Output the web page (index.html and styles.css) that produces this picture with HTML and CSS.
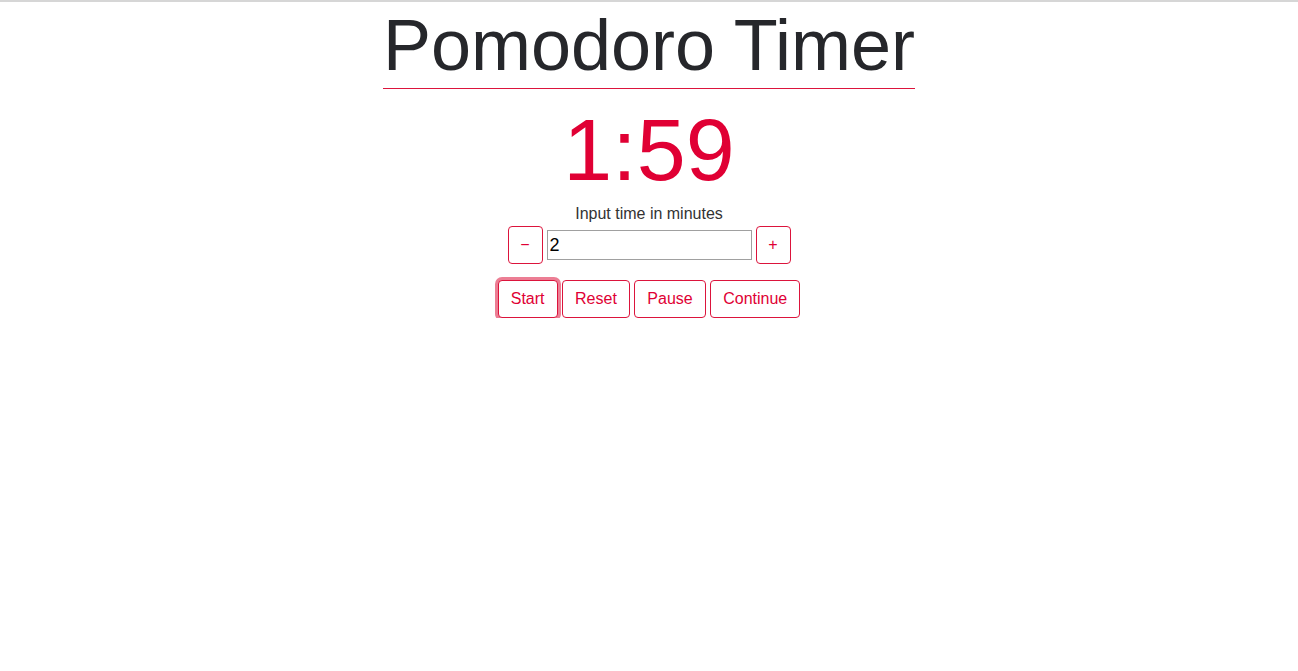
FILE: index.html
```html
<!DOCTYPE html>
<html lang="en">
<head>
<meta charset="utf-8">
<title>Pomodoro Timer</title>
<link rel="stylesheet" href="styles.css">
</head>
<body>
<div class="topline"></div>
<main class="app">
  <h1 class="title">Pomodoro Timer</h1>
  <div class="timer">1:59</div>
  <label class="label" for="minutes">Input time in minutes</label>
  <div class="input-row">
    <button class="btn btn-step">&minus;</button>
    <input id="minutes" class="minutes" type="text" value="2">
    <button class="btn btn-step">+</button>
  </div>
  <div class="controls">
    <button class="btn btn-focus">Start</button>
    <button class="btn">Reset</button>
    <button class="btn">Pause</button>
    <button class="btn">Continue</button>
  </div>
</main>
</body>
</html>
```
FILE: styles.css
```css
html, body {
  margin: 0;
  padding: 0;
  background: #ffffff;
  font-family: "Liberation Sans", Arial, sans-serif;
  color: #212529;
}

.topline {
  height: 2px;
  background: #d6d6d6;
}

.app {
  display: flex;
  flex-direction: column;
  align-items: center;
}

.title {
  margin: 2px 0 0;
  padding-bottom: 2px;
  font-size: 72px;
  font-weight: 400;
  line-height: normal;
  color: #26272b;
  border-bottom: 1px solid #dc143c;
}

.timer {
  margin-top: 10px;
  font-size: 88px;
  line-height: normal;
  color: #e00034;
}

.label {
  margin-top: 4px;
  font-size: 16px;
  line-height: 18px;
  color: #333333;
}

.input-row {
  margin-top: 3px;
  display: flex;
  align-items: center;
  gap: 4px;
}

.minutes {
  box-sizing: border-box;
  width: 205px;
  height: 30px;
  padding: 1px 2px;
  border: 1px solid #a0a0a0;
  font-family: "Liberation Sans", Arial, sans-serif;
  font-size: 18px;
  color: #000;
}

.controls {
  margin-top: 16px;
  display: flex;
  gap: 4.5px;
}

.btn {
  box-sizing: border-box;
  height: 38px;
  padding: 6px 12px;
  border: 1px solid #dc143c;
  border-radius: 4px;
  background: #ffffff;
  color: #e00034;
  font-family: "Liberation Sans", Arial, sans-serif;
  font-size: 16px;
  line-height: 24px;
  cursor: pointer;
}

.btn-step {
  width: 35px;
  padding: 6px 0;
}

.btn-focus {
  box-shadow: 0 0 0 3px rgba(220, 20, 60, 0.55);
}
```
